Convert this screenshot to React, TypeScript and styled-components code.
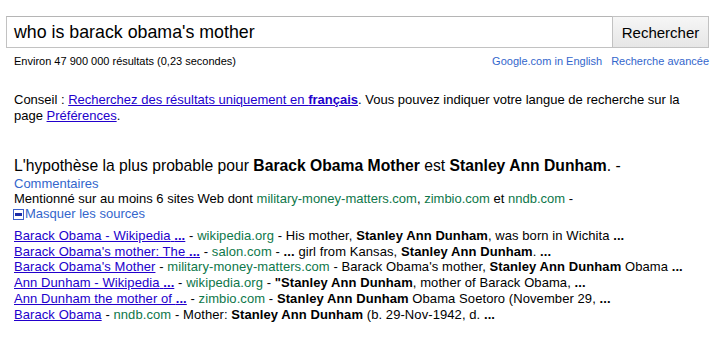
import styled, { createGlobalStyle } from 'styled-components';

const GlobalStyle = createGlobalStyle`
  html, body {
    margin: 0;
    padding: 0;
    background: #fff;
  }
  body {
    font-family: 'Liberation Sans', Arial, sans-serif;
    color: #000;
  }
`;

const results = [
  {
    title: 'Barack Obama - Wikipedia',
    more: true,
    site: 'wikipedia.org',
    snippet: (
      <>
        His mother, <b>Stanley Ann Dunham</b>, was born in Wichita <b>...</b>
      </>
    ),
  },
  {
    title: "Barack Obama's mother: The",
    more: true,
    site: 'salon.com',
    snippet: (
      <>
        <b>...</b> girl from Kansas, <b>Stanley Ann Dunham</b>. <b>...</b>
      </>
    ),
  },
  {
    title: "Barack Obama's Mother",
    more: false,
    site: 'military-money-matters.com',
    snippet: (
      <>
        Barack Obama's mother, <b>Stanley Ann Dunham</b> Obama <b>...</b>
      </>
    ),
  },
  {
    title: 'Ann Dunham - Wikipedia',
    more: true,
    site: 'wikipedia.org',
    snippet: (
      <>
        <b>"Stanley Ann Dunham</b>, mother of Barack Obama, <b>...</b>
      </>
    ),
  },
  {
    title: 'Ann Dunham the mother of',
    more: true,
    site: 'zimbio.com',
    snippet: (
      <>
        <b>Stanley Ann Dunham</b> Obama Soetoro (November 29, <b>...</b>
      </>
    ),
  },
  {
    title: 'Barack Obama',
    more: false,
    site: 'nndb.com',
    snippet: (
      <>
        Mother: <b>Stanley Ann Dunham</b> (b. 29-Nov-1942, d. <b>...</b>
      </>
    ),
  },
];

export default function App() {
  return (
    <Page>
      <GlobalStyle />
      <SearchRow>
        <QueryBox>who is barack obama's mother</QueryBox>
        <SearchButton>Rechercher</SearchButton>
      </SearchRow>
      <StatsRow>
        <Stats>Environ 47 900 000 résultats (0,23 secondes)</Stats>
        <TopLinks>
          <SmallLink>Google.com in English</SmallLink>
          <SmallLink>Recherche avancée</SmallLink>
        </TopLinks>
      </StatsRow>

      <Tip>
        <TipLine>
          Conseil : <Link>Recherchez des résultats uniquement en <b>français</b></Link>. Vous
          pouvez indiquer votre langue de recherche sur la
        </TipLine>
        <TipLine>
          page <Link>Préférences</Link>.
        </TipLine>
      </Tip>

      <Answer>
        L'hypothèse la plus probable pour <b>Barack Obama Mother</b> est{' '}
        <b>Stanley Ann Dunham</b>. -
      </Answer>
      <Lines>
        <div>
          <SoftLink>Commentaires</SoftLink>
        </div>
        <div>
          Mentionné sur au moins 6 sites Web dont <Site>military-money-matters.com</Site>,{' '}
          <Site>zimbio.com</Site> et <Site>nndb.com</Site> -
        </div>
        <Toggle>
          <svg width="11" height="11" viewBox="0 0 11 11">
            <rect x="0.5" y="0.5" width="10" height="10" fill="#fff" stroke="#3b5fc9" />
            <rect x="2" y="4" width="7" height="3" fill="#1f2fa8" />
          </svg>
          <SoftLink>Masquer les sources</SoftLink>
        </Toggle>
      </Lines>

      <Sources>
        {results.map((r, i) => (
          <li key={i}>
            <Link>
              {r.title}
              {r.more && (
                <>
                  {' '}
                  <b>...</b>
                </>
              )}
            </Link>{' '}
            - <Site>{r.site}</Site> - {r.snippet}
          </li>
        ))}
      </Sources>
    </Page>
  );
}

const Page = styled.div`
  width: 721px;
  height: 338px;
  overflow: hidden;
  padding: 16px 0 0 6px;
  box-sizing: border-box;
`;

const SearchRow = styled.div`
  display: flex;
  width: 703px;
  height: 32px;
`;

const QueryBox = styled.div`
  flex: 1;
  box-sizing: border-box;
  border: 1px solid #c2c2c2;
  border-top-color: #b5b5b5;
  border-right: none;
  padding-left: 7px;
  font-size: 17.8px;
  line-height: 30px;
  white-space: nowrap;
`;

const SearchButton = styled.div`
  width: 97px;
  box-sizing: border-box;
  border: 1px solid #c2c2c2;
  background: linear-gradient(#f6f6f6, #e6e6e6);
  font-size: 15px;
  line-height: 31px;
  text-align: center;
`;

const StatsRow = styled.div`
  display: flex;
  justify-content: space-between;
  width: 703px;
  margin-top: 7px;
  font-size: 11px;
  line-height: 13px;
`;

const Stats = styled.span`
  padding-left: 8px;
`;

const TopLinks = styled.div`
  display: flex;
  gap: 9px;
`;

const SmallLink = styled.span`
  color: #36c;
`;

const Tip = styled.div`
  margin: 24px 0 0 8px;
  font-size: 13px;
  line-height: 16px;
`;

const TipLine = styled.div`
  white-space: nowrap;
`;

const Link = styled.span`
  color: #2200cc;
  text-decoration: underline;
`;

const SoftLink = styled.span`
  color: #36c;
`;

const Site = styled.span`
  color: #0e774a;
`;

const Answer = styled.div`
  margin: 33px 0 0 8px;
  font-size: 15.7px;
  line-height: 18px;
`;

const Lines = styled.div`
  margin: 1px 0 0 8px;
  font-size: 13px;
  line-height: 15px;
`;

const Toggle = styled.div`
  display: flex;
  align-items: center;
  gap: 1px;
  margin-left: -1px;

  svg {
    display: block;
    margin-top: 1px;
  }
`;

const Sources = styled.ul`
  list-style: none;
  margin: 7px 0 0 8px;
  padding: 0;
  font-size: 13px;
  line-height: 15.7px;
  letter-spacing: 0.08px;

  li {
    white-space: nowrap;
  }
`;
